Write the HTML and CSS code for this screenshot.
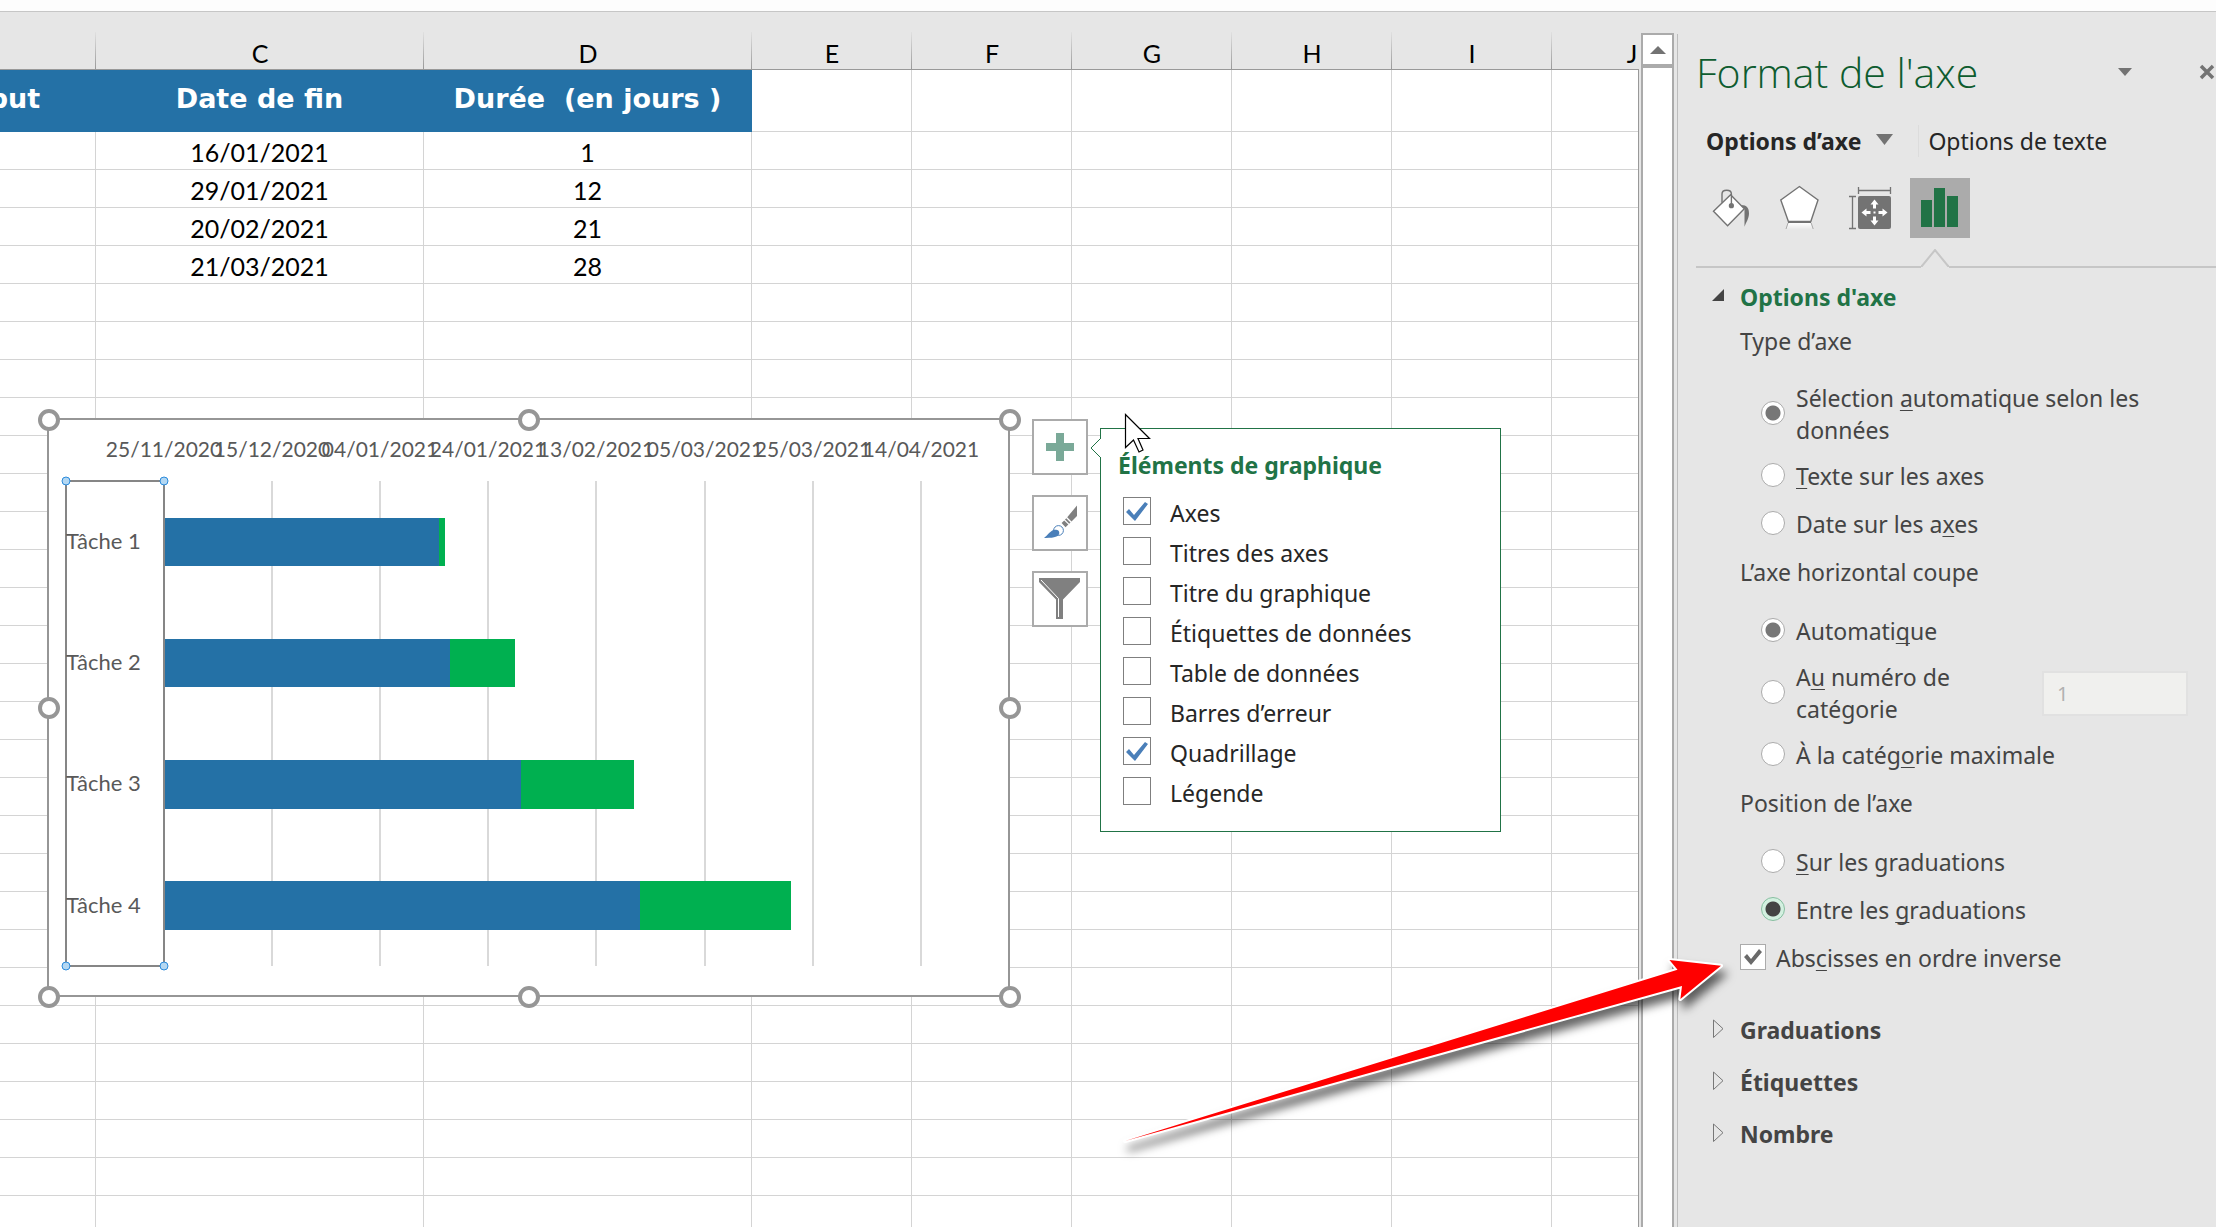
FILE: index.html
```html
<!DOCTYPE html>
<html lang="fr">
<head>
<meta charset="utf-8">
<title>Diagramme de Gantt</title>
<link rel="stylesheet" href="styles.css">
</head>
<body>
<div class="ribbon-edge"></div>
<main class="workspace">
  <section class="sheet" aria-label="Feuille de calcul">
    <table class="grid">
      <colgroup><col class="wide"><col class="wide"><col class="wide"><col><col><col><col><col><col></colgroup>
      <thead>
        <tr><th>B</th><th>C</th><th>D</th><th>E</th><th>F</th><th>G</th><th>H</th><th>I</th><th>J</th></tr>
      </thead>
      <tbody>
        <tr class="titles"><td class="title">Date de début</td><td class="title">Date de fin</td><td class="title">Durée&nbsp; (en jours )</td><td></td><td></td><td></td><td></td><td></td><td></td></tr>
        <tr><td class="start">15/01/2021</td><td>16/01/2021</td><td>1</td><td></td><td></td><td></td><td></td><td></td><td></td></tr>
        <tr><td class="start">17/01/2021</td><td>29/01/2021</td><td>12</td><td></td><td></td><td></td><td></td><td></td><td></td></tr>
        <tr><td class="start">30/01/2021</td><td>20/02/2021</td><td>21</td><td></td><td></td><td></td><td></td><td></td><td></td></tr>
        <tr><td class="start">21/02/2021</td><td>21/03/2021</td><td>28</td><td></td><td></td><td></td><td></td><td></td><td></td></tr>
        <tr><td><td><td><td><td><td><td><td><td></tr>
        <tr><td><td><td><td><td><td><td><td><td></tr>
        <tr><td><td><td><td><td><td><td><td><td></tr>
        <tr><td><td><td><td><td><td><td><td><td></tr>
        <tr><td><td><td><td><td><td><td><td><td></tr>
        <tr><td><td><td><td><td><td><td><td><td></tr>
        <tr><td><td><td><td><td><td><td><td><td></tr>
        <tr><td><td><td><td><td><td><td><td><td></tr>
        <tr><td><td><td><td><td><td><td><td><td></tr>
        <tr><td><td><td><td><td><td><td><td><td></tr>
        <tr><td><td><td><td><td><td><td><td><td></tr>
        <tr><td><td><td><td><td><td><td><td><td></tr>
        <tr><td><td><td><td><td><td><td><td><td></tr>
        <tr><td><td><td><td><td><td><td><td><td></tr>
        <tr><td><td><td><td><td><td><td><td><td></tr>
        <tr><td><td><td><td><td><td><td><td><td></tr>
        <tr><td><td><td><td><td><td><td><td><td></tr>
        <tr><td><td><td><td><td><td><td><td><td></tr>
        <tr><td><td><td><td><td><td><td><td><td></tr>
        <tr><td><td><td><td><td><td><td><td><td></tr>
        <tr><td><td><td><td><td><td><td><td><td></tr>
        <tr><td><td><td><td><td><td><td><td><td></tr>
        <tr><td><td><td><td><td><td><td><td><td></tr>
        <tr><td><td><td><td><td><td><td><td><td></tr>
        <tr><td><td><td><td><td><td><td><td><td></tr>
      </tbody>
    </table>

    <svg class="chart" viewBox="36 408 986 602" width="986" height="602" role="img" aria-label="Diagramme de Gantt des tâches">
      <rect x="48" y="419" width="961" height="577" fill="#fff" stroke="#969696" stroke-width="2"/>
      <path class="gridlines" d="M272 481V966M380 481V966M488 481V966M596 481V966M705 481V966M813 481V966M921 481V966"/>
      <g class="bar-offset">
        <rect x="165" y="518" width="274" height="48"/><rect x="165" y="639" width="285" height="48"/>
        <rect x="165" y="760" width="356" height="49"/><rect x="165" y="881" width="475" height="49"/>
      </g>
      <g class="bar-duration">
        <rect x="439" y="518" width="6" height="48"/><rect x="450" y="639" width="65" height="48"/>
        <rect x="521" y="760" width="113" height="49"/><rect x="640" y="881" width="151" height="49"/>
      </g>
      <rect x="66" y="481" width="98" height="485" fill="none" stroke="#868686" stroke-width="2"/>
      <g class="chart-dates">
        <text x="164" y="457">25/11/2020</text><text x="272" y="457">15/12/2020</text>
        <text x="380" y="457">04/01/2021</text><text x="488" y="457">24/01/2021</text>
        <text x="596" y="457">13/02/2021</text><text x="705" y="457">05/03/2021</text>
        <text x="813" y="457">25/03/2021</text><text x="921" y="457">14/04/2021</text>
      </g>
      <g class="chart-tasks">
        <text x="66" y="549">Tâche 1</text><text x="66" y="670">Tâche 2</text>
        <text x="66" y="791">Tâche 3</text><text x="66" y="913">Tâche 4</text>
      </g>
      <g class="axis-handles">
        <circle cx="66" cy="481" r="4"/><circle cx="164" cy="481" r="4"/>
        <circle cx="66" cy="966" r="4"/><circle cx="164" cy="966" r="4"/>
      </g>
      <g class="chart-handles">
        <circle cx="49" cy="420" r="9"/><circle cx="529" cy="420" r="9"/><circle cx="1010" cy="420" r="9"/>
        <circle cx="49" cy="708" r="9"/><circle cx="1010" cy="708" r="9"/>
        <circle cx="49" cy="997" r="9"/><circle cx="529" cy="997" r="9"/><circle cx="1010" cy="997" r="9"/>
      </g>
    </svg>

    <div class="chart-tools">
      <button type="button" aria-label="Éléments de graphique">
        <svg viewBox="2 2 52 52"><path fill="#7aa998" d="M24 14h8v10h10v8H32v10h-8V32H14v-8h10z"/></svg>
      </button>
      <button type="button" aria-label="Styles du graphique">
        <svg viewBox="2 2 52 52">
          <path fill="#808080" d="M45 10.5v10.500l-5.500 5.500-4.300-4.300zM34.300 23.200l4.200 4.200-1.300 1.300-4.200-4.200zM32.200 25.400l4.200 4.200-2.900 2.600-3.900-4.200z"/>
          <circle cx="26.500" cy="35.500" r="4.900" fill="#fff" stroke="#4a7fb9"/>
          <path fill="#4a7fb9" d="M12 43c4-3 7-8 10.500-8.200 3.500-.2 5.500 1.200 4.600 4.300-.8 2.500-4.100 4.100-15.100 3.900z"/>
        </svg>
      </button>
      <button type="button" aria-label="Filtres du graphique">
        <svg viewBox="2 2 52 52">
          <path fill="#808080" d="M7 7h41v4L31 28.500V48h-7V28.500L7 11z"/>
          <path fill="none" stroke="#fff" d="M9 9l17.500 18.500V46"/>
        </svg>
      </button>
    </div>

    <section class="popup">
      <svg class="popup-notch" viewBox="0 0 11 20" width="11" height="20"><path d="M11 0L1 10l10 10" fill="#fff" stroke="#217346"/></svg>
      <h2>Éléments de graphique</h2>
      <label><input type="checkbox" checked>Axes</label>
      <label><input type="checkbox">Titres des axes</label>
      <label><input type="checkbox">Titre du graphique</label>
      <label><input type="checkbox">Étiquettes de données</label>
      <label><input type="checkbox">Table de données</label>
      <label><input type="checkbox">Barres d’erreur</label>
      <label><input type="checkbox" checked>Quadrillage</label>
      <label><input type="checkbox">Légende</label>
    </section>

    <svg class="cursor" viewBox="0 0 28 42" width="28" height="42"><path d="M1.500 1.500v33l8-7.500 5.500 12 4-2-5-11.500h11.500z" fill="#fff" stroke="#000" stroke-width="1.200"/></svg>
  </section>

  <div class="scrollbar">
    <button type="button" aria-label="Défiler vers le haut"><svg viewBox="0 0 16 10" width="16" height="10"><path fill="#737373" d="M8 1l8 8H0z"/></svg></button>
  </div>

  <aside class="pane">
    <header class="pane-head">
      <h1>Format de l'axe</h1>
      <button type="button" class="pane-menu" aria-label="Options du volet"><svg viewBox="0 0 14 8" width="14" height="8"><path fill="#737373" d="M0 0h14L7 8z"/></svg></button>
      <button type="button" class="pane-close" aria-label="Fermer"><svg viewBox="0 0 16 16" width="16" height="16"><path stroke="#737373" stroke-width="3.500" d="M2 2l12 12M14 2L2 14"/></svg></button>
    </header>

    <nav class="pane-tabs">
      <button type="button" class="tab-active">Options d’axe <svg viewBox="0 0 17 14" width="17" height="14"><path fill="#737373" d="M0 0h17L8.500 11z"/></svg></button>
      <button type="button" class="tab-text">Options de texte</button>
    </nav>

    <div class="pane-icons">
      <button type="button" aria-label="Remplissage et trait">
        <svg viewBox="0 0 60 60">
          <path d="M13.500 33.300L30.600 16.700 44.300 30.700 27.600 47.700z" fill="#fff" stroke="#737373" stroke-width="1.400"/>
          <path d="M22 24.700V16c0-5 9.400-5 9.400 0v11" fill="none" stroke="#737373" stroke-width="1.400"/>
          <circle cx="31.400" cy="27.700" r="2.600" fill="#737373"/>
          <path d="M41 27c6 0 8 3 8 8.500 0 5-3 9-4.500 13.200V31z" fill="#737373"/>
        </svg>
      </button>
      <button type="button" aria-label="Effets">
        <svg viewBox="0 0 60 60">
          <defs><linearGradient id="fade" x1="0" y1="0" x2="0" y2="1"><stop offset="0" stop-color="#fff"/><stop offset="1" stop-color="#fff" stop-opacity="0"/></linearGradient></defs>
          <path d="M18.400 45h22.400l2.500 7H16z" fill="url(#fade)"/>
          <path d="M18 45l-2 6M41.200 45l2 6" stroke="#aaa"/>
          <path d="M29.400 8.500L48 22l-7.200 21.500H18.400L10.800 22z" fill="#fff" stroke="#737373" stroke-width="1.400"/>
          <path d="M18 44h23" stroke="#737373" stroke-width="2"/>
        </svg>
      </button>
      <button type="button" aria-label="Taille et propriétés">
        <svg viewBox="0 0 60 60">
          <rect x="18" y="18" width="33" height="33" rx="2" fill="#737373"/>
          <path d="M18.500 9v7M50.500 9v7M18 12.500h33M9 18.500h7M9 50.500h7M12.500 18v33" stroke="#737373" stroke-width="1.300"/>
          <path fill="#fff" d="M34.500 21.500l4 5h-2.500v4h-3v-4h-2.500zM34.500 47.500l4-5h-2.500v-4h-3v4h-2.500zM21.500 34.500l5-4v2.500h4v3h-4v2.500zM47.500 34.500l-5-4v2.500h-4v3h4v2.500zM33.500 33.500h2v2h-2z"/>
        </svg>
      </button>
      <button type="button" class="selected" aria-label="Options d’axe">
        <svg viewBox="0 0 60 60"><path fill="#217346" d="M11 22h11v27H11zM24 10h11v39H24zM37 18h11v31H37z"/></svg>
      </button>
    </div>

    <div class="pane-rule"><svg viewBox="0 0 28 20" width="28" height="20"><path d="M0 20V17L1 17L14 1L27 17H28V20z" fill="#e6e6e6"/><path d="M0 17h1L14 1l13 16h1" fill="none" stroke="#c6c6c6" stroke-width="2"/></svg></div>

    <div class="pane-body">
      <button type="button" class="section open"><svg viewBox="0 0 12 20" width="12" height="20"><path fill="#444" d="M12 3v12H0z"/></svg>Options d'axe</button>

      <div class="axis-options">
        <fieldset>
          <legend>Type d’axe</legend>
          <div class="choices">
            <label class="tall"><input type="radio" name="type" checked><span>Sélection <u>a</u>utomatique selon les données</span></label>
            <label><input type="radio" name="type"><span><u>T</u>exte sur les axes</span></label>
            <label><input type="radio" name="type"><span>Date sur les a<u>x</u>es</span></label>
          </div>
        </fieldset>
        <fieldset>
          <legend>L’axe horizontal coupe</legend>
          <div class="choices">
            <label><input type="radio" name="cross" checked><span>Automati<u>q</u>ue</span></label>
            <div class="with-field">
              <label class="tall"><input type="radio" name="cross"><span>A<u>u</u> numéro de catégorie</span></label>
              <input type="text" value="1" aria-label="Numéro de catégorie" disabled>
            </div>
            <label><input type="radio" name="cross"><span>À la catég<u>o</u>rie maximale</span></label>
          </div>
        </fieldset>
        <fieldset>
          <legend>Position de l’axe</legend>
          <div class="choices">
            <label><input type="radio" name="position"><span><u>S</u>ur les graduations</span></label>
            <label><input type="radio" name="position" class="focused" checked><span>Entre les <u>g</u>raduations</span></label>
          </div>
        </fieldset>
        <label class="reverse"><input type="checkbox" checked><span>Abs<u>c</u>isses en ordre inverse</span></label>
      </div>

      <div class="closed-sections">
        <button type="button" class="section"><svg viewBox="0 0 12 20" width="12" height="20"><path d="M1.500 1v17.500L11 9.700z" fill="none" stroke="#777"/></svg>Graduations</button>
        <button type="button" class="section"><svg viewBox="0 0 12 20" width="12" height="20"><path d="M1.500 1v17.500L11 9.700z" fill="none" stroke="#777"/></svg>Étiquettes</button>
        <button type="button" class="section"><svg viewBox="0 0 12 20" width="12" height="20"><path d="M1.500 1v17.500L11 9.700z" fill="none" stroke="#777"/></svg>Nombre</button>
      </div>
    </div>
  </aside>

  <svg class="arrow" viewBox="1110 940 630 220" width="630" height="220" aria-hidden="true">
    <path d="M1125 1141L1677.500 969.700 1669.500 960 1721 965.700 1680.400 999 1682 986z" fill="#f00" stroke="#fff" stroke-width="4" stroke-linejoin="round" paint-order="stroke"/>
  </svg>
</main>
</body>
</html>
```

FILE: styles.css
```css
* { box-sizing: border-box; }

body {
  margin: 0;
  height: 100vh;
  display: flex;
  flex-direction: column;
  overflow: hidden;
  background: #e6e6e6;
  color: #444;
  font: 23px/32px "Noto Sans", "Open Sans", sans-serif;
}

button {
  margin: 0;
  padding: 0;
  border: 0;
  background: none;
  color: inherit;
  font: inherit;
}

svg { display: block; flex: none; }
h1, h2 { margin: 0; }

.ribbon-edge {
  flex: none;
  height: 12px;
  background: #fdfdfd;
  border-bottom: 1px solid #c6c6c6;
}

.workspace {
  position: relative;
  flex: 1;
  min-height: 0;
  display: flex;
}

/* Worksheet */
.sheet {
  position: relative;
  flex: 1;
  min-width: 0;
  margin-top: 20px;
  overflow: hidden;
}

.sheet::after {
  content: "";
  position: absolute;
  inset: 37px 0 0 auto;
  width: 1px;
  background: #999;
}

.grid {
  width: 1944px;
  margin-left: -232px;
  table-layout: fixed;
  border-spacing: 0;
  color: #000;
  font: 25px/30px Lato, Carlito, sans-serif;
}

.grid col { width: 160px; }
.grid col.wide { width: 328px; }

.grid th {
  height: 38px;
  padding: 4px 0 0;
  font-weight: 400;
  background: linear-gradient(#e0e0e0, #999) right / 1px 100% no-repeat;
  border-bottom: 1px solid #999;
}

.grid td {
  height: 38px;
  padding: 2px 0 0;
  text-align: center;
  background: #fff;
  border-right: 1px solid #d4d4d4;
  border-bottom: 1px solid #d4d4d4;
}

.grid .titles td { height: 62px; }

.grid td.title {
  padding: 0 0 4px;
  color: #fff;
  background: #2471a6;
  border-color: #2471a6;
  font: 700 27px/32px "DejaVu Sans", sans-serif;
}

.grid td.start { color: #000080; }

/* Chart placed on the sheet */
.chart {
  position: absolute;
  left: 36px;
  top: 376px;
  font: 21px Lato, Carlito, sans-serif;
}

.chart text { fill: #595959; }
.chart-dates { text-anchor: middle; }
.chart-tasks { font-size: 22px; }
.gridlines { stroke: #d9d9d9; stroke-width: 2; }
.bar-offset { fill: #2471a6; }
.bar-duration { fill: #00b050; }
.axis-handles { fill: #b3d7f2; stroke: #2b8bdc; }
.chart-handles { fill: #fff; stroke: #969696; stroke-width: 4; }

.chart-tools {
  position: absolute;
  left: 1032px;
  top: 387px;
  display: grid;
  gap: 20px;
}

.chart-tools button {
  width: 56px;
  height: 56px;
  background: #fff;
  border: 2px solid #ababab;
}

.popup {
  position: absolute;
  left: 1100px;
  top: 396px;
  width: 401px;
  padding: 20px 17px 18px;
  background: #fff;
  border: 1px solid #217346;
  color: #262626;
}

.popup-notch {
  position: absolute;
  left: -11px;
  top: 9px;
}

.popup h2 {
  margin-bottom: 12px;
  color: #217346;
  font: inherit;
  font-weight: 700;
}

.popup label {
  display: flex;
  align-items: center;
  gap: 19px;
  height: 40px;
  padding-left: 5px;
}

input[type="checkbox"] {
  appearance: none;
  flex: none;
  width: 28px;
  height: 28px;
  margin: 0;
  background: #fff;
  border: 1px solid #7f7f7f;
}

.popup input { margin-bottom: 4px; }

input[type="checkbox"]:checked::before {
  content: "";
  display: block;
  height: 100%;
  background: #4a7fb9;
  clip-path: polygon(2px 14px, 5px 11px, 10px 17px, 21px 4px, 24px 6px, 11px 23px);
}

.cursor {
  position: absolute;
  left: 1124px;
  top: 381px;
}

/* Vertical scrollbar */
.scrollbar {
  flex: none;
  width: 33px;
  margin: 21px 3px 0 2px;
  background: #fff;
  border: solid #ababab;
  border-width: 2px 2px 0;
}

.scrollbar button {
  display: grid;
  place-items: center;
  width: 100%;
  height: 33px;
  border-bottom: 4px solid #ababab;
}

/* Format pane */
.pane {
  flex: none;
  width: 539px;
  margin-top: 22px;
  border-left: 1px solid #bdbdbd;
}

.pane-head {
  display: flex;
  align-items: center;
  height: 76px;
  padding: 0 1px 0 18px;
}

.pane-head h1 {
  flex: 1;
  color: #0e5c2f;
  font: 300 41px/48px "Open Sans", "Noto Sans", sans-serif;
}

.pane-menu { margin-right: 67px; }

.pane-tabs {
  display: flex;
  align-items: center;
  height: 36px;
  margin: 13px 0 19px 28px;
  color: #262626;
}

.tab-active {
  display: flex;
  align-items: center;
  gap: 15px;
  padding-right: 25px;
  font-weight: 700;
}

.tab-text {
  padding-left: 9px;
  border-left: 1px solid #dcdcdc;
}

.pane-icons {
  display: flex;
  gap: 10px;
  padding-left: 22px;
}

.pane-icons button { width: 60px; height: 60px; }
.pane-icons .selected { background: #ababab; }

.pane-rule {
  height: 30px;
  margin-left: 18px;
  padding: 11px 0 0 225px;
  border-bottom: 2px solid #c6c6c6;
}

.pane-body { padding: 13px 20px 0 34px; }

.section {
  display: flex;
  align-items: center;
  gap: 16px;
  font-weight: 700;
}

.section svg { margin-bottom: 2px; }
.section.open { color: #217346; }

.axis-options {
  display: flex;
  flex-direction: column;
  gap: 16px;
  margin: 12px 0 40px 28px;
}

fieldset {
  min-width: 0;
  margin: 0;
  padding: 0;
  border: 0;
}

legend {
  padding: 0;
  margin-bottom: 27px;
}

.choices {
  display: flex;
  flex-direction: column;
  gap: 16px;
  padding-left: 21px;
}

.choices label, .reverse {
  display: flex;
  align-items: center;
  gap: 11px;
}

.choices .tall { margin: -2px 0; }
.reverse { gap: 10px; }

u {
  text-decoration-thickness: 1px;
  text-underline-offset: 3px;
  text-decoration-skip-ink: none;
}

input[type="radio"] {
  appearance: none;
  flex: none;
  width: 24px;
  height: 24px;
  margin: 0 0 2px;
  background: #fff;
  border: 1px solid #ababab;
  border-radius: 50%;
}

input[type="radio"]:checked { background: radial-gradient(circle, #777 0 7px, #fff 8px); }

input[type="radio"].focused {
  background: radial-gradient(circle, #444 0 7px, #d3f0e0 8px);
  border-color: #86bfa0;
}

.with-field {
  display: flex;
  align-items: center;
  justify-content: space-between;
}

.with-field label { width: 220px; }

input[type="text"] {
  width: 146px;
  height: 45px;
  margin-right: 8px;
  padding: 0 13px;
  background: #f0f0ee;
  border: 2px solid #e1e1e1;
  color: #b1b1b1;
  font: 20px "Noto Sans", sans-serif;
}

.reverse input[type="checkbox"] {
  width: 26px;
  height: 26px;
  margin-bottom: 2px;
  border-color: #ababab;
}

.reverse input:checked::before {
  background: #6a6a6a;
  clip-path: polygon(3px 12px, 6px 9px, 10px 14px, 18px 4px, 21px 7px, 10px 20px);
}

.closed-sections {
  display: grid;
  gap: 20px;
}

/* Callout arrow drawn over sheet and pane */
.arrow {
  position: absolute;
  left: 1110px;
  top: 928px;
  filter: drop-shadow(4px 8px 5px rgba(0, 0, 0, .6));
  pointer-events: none;
}
```
